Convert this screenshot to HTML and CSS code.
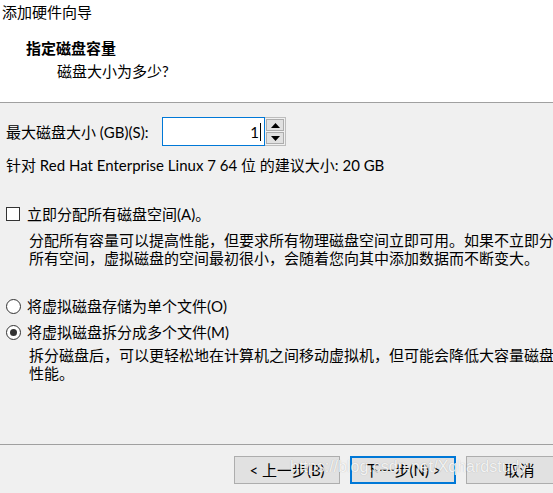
FILE: index.html
```html
<!DOCTYPE html>
<html lang="zh-CN">
<head>
<meta charset="utf-8">
<title>添加硬件向导</title>
<link rel="stylesheet" href="styles.css">
</head>
<body>
<div class="window">
  <header class="header">
    <div class="title">添加硬件向导</div>
    <div class="heading">指定磁盘容量</div>
    <div class="subtitle">磁盘大小为多少?</div>
  </header>
  <main class="main">
    <div class="size-row">
      <label class="size-label">最大磁盘大小 (GB)(S):</label>
      <div class="spin">
        <div class="spin-input"><span class="val">1</span><span class="caret"></span></div>
        <div class="spin-btns">
          <div class="spin-btn"><svg width="9" height="5" viewBox="0 0 9 5"><path d="M0 5 L4.5 0 L9 5 Z" fill="#000"/></svg></div>
          <div class="spin-btn"><svg width="9" height="5" viewBox="0 0 9 5"><path d="M0 0 L9 0 L4.5 5 Z" fill="#000"/></svg></div>
        </div>
      </div>
    </div>
    <div class="recommend">针对 Red Hat Enterprise Linux 7 64 位 的建议大小: 20 GB</div>

    <div class="option option-check">
      <span class="checkbox"></span>
      <span>立即分配所有磁盘空间(A)。</span>
    </div>
    <div class="desc">分配所有容量可以提高性能，但要求所有物理磁盘空间立即可用。如果不立即分配<br>所有空间，虚拟磁盘的空间最初很小，会随着您向其中添加数据而不断变大。</div>

    <div class="option option-radio1">
      <span class="radio"></span>
      <span>将虚拟磁盘存储为单个文件(O)</span>
    </div>
    <div class="option option-radio2">
      <span class="radio checked"></span>
      <span>将虚拟磁盘拆分成多个文件(M)</span>
    </div>
    <div class="desc desc-split">拆分磁盘后，可以更轻松地在计算机之间移动虚拟机，但可能会降低大容量磁盘的<br>性能。</div>
  </main>
  <footer class="footer">
    <button class="btn">&lt; 上一步(B)</button>
    <button class="btn btn-default">下一步(N) &gt;</button>
    <button class="btn btn-cancel">取消</button>
    <div class="watermark">https://blog.csdn.net/Xqhardstudy</div>
  </footer>
</div>
</body>
</html>
```
FILE: styles.css
```css
html, body {
  margin: 0;
  padding: 0;
  background: #f0f0f0;
  overflow: hidden;
}
body {
  font-family: "Lato", "Noto Sans CJK SC", sans-serif;
  font-size: 15px;
  line-height: 18px;
  color: #000;
}
.window {
  width: 585px;
  height: 503px;
  display: flex;
  flex-direction: column;
}
.header {
  background: #fff;
  height: 102px;
  border-bottom: 1px solid #a0a0a0;
  flex: none;
}
.title {
  padding: 3px 0 0 2px;
}
.heading {
  font-weight: bold;
  margin: 18px 0 0 26px;
}
.subtitle {
  margin: 5px 0 0 57px;
}
.main {
  padding-left: 6px;
  white-space: nowrap;
}
.size-row {
  display: flex;
  align-items: center;
  margin-top: 14px;
}
.size-label {
  width: 156px;
}
.spin {
  display: flex;
  height: 29px;
}
.spin-input {
  width: 98px;
  height: 27px;
  border: 1px solid #0078d7;
  background: #fff;
  display: flex;
  align-items: center;
  justify-content: flex-end;
  padding-right: 3px;
  box-sizing: content-box;
}
.val {
  line-height: 18px;
}
.caret {
  width: 1px;
  height: 18px;
  background: #000;
  margin-left: 1px;
}
.spin-btns {
  width: 21px;
  display: flex;
  flex-direction: column;
  border: 1px solid #bdbdbd;
  border-left: none;
  box-sizing: border-box;
  background: #f0f0f0;
  padding: 1px;
  gap: 1px;
}
.spin-btn {
  flex: 1;
  background: #e1e1e1;
  border: 1px solid #adadad;
  display: flex;
  align-items: center;
  justify-content: center;
}
.recommend {
  margin-top: 10px;
}
.option {
  display: flex;
  align-items: center;
  gap: 6px;
}
.option-check {
  margin-top: 31px;
}
.option-radio1 {
  margin-top: 30px;
}
.option-radio2 {
  margin-top: 8px;
}
.checkbox {
  width: 12px;
  height: 12px;
  border: 1px solid #333;
  background: #fff;
  flex: none;
  margin-right: 1px;
}
.radio {
  width: 13px;
  height: 13px;
  border: 1px solid #333;
  border-radius: 50%;
  background: #fff;
  flex: none;
  display: flex;
  align-items: center;
  justify-content: center;
}
.radio.checked::after {
  content: "";
  width: 7px;
  height: 7px;
  border-radius: 50%;
  background: #333;
}
.desc {
  margin: 8px 0 0 23px;
}
.desc-split {
  margin-top: 5px;
}
.footer {
  margin-top: auto;
  height: 47px;
  border-top: 1px solid #a0a0a0;
  display: flex;
  justify-content: flex-end;
  align-items: flex-start;
  padding: 11px 12px 0 0;
  gap: 10px;
  position: relative;
  flex: none;
}
.btn {
  font: inherit;
  width: 106px;
  height: 28px;
  background: #e1e1e1;
  border: 1px solid #adadad;
  padding: 0;
  color: #000;
}
.btn-default {
  border: 2px solid #0078d7;
}
.btn-cancel {
  width: 107px;
}
.watermark {
  position: absolute;
  left: 290px;
  top: 12px;
  font-family: "Liberation Sans", sans-serif;
  font-size: 16px;
  line-height: 20px;
  color: rgba(255, 255, 255, 0.85);
  text-shadow: 0 0 1px rgba(0, 0, 0, 0.25);
  pointer-events: none;
  white-space: nowrap;
}
```
